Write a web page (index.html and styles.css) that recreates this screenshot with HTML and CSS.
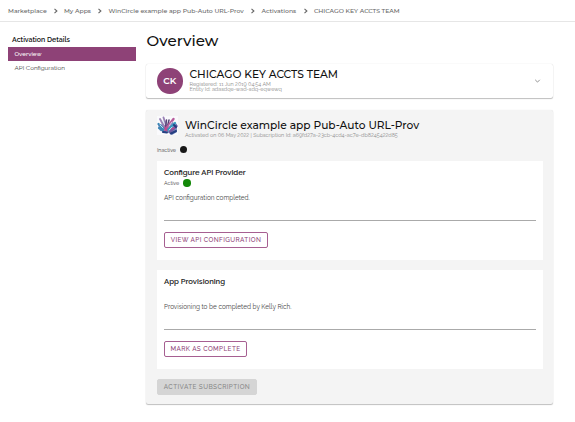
FILE: index.html
```
<!DOCTYPE html>
<html lang="en">
<head>
<meta charset="utf-8">
<title>Activation Overview</title>
<link rel="stylesheet" href="styles.css">
</head>
<body>
<nav class="crumbs">
  <span class="c1">Marketplace</span><svg class="sep" viewBox="0 0 6 8"><path d="M1.5 1.8 3.900 4 1.5 6.200"/></svg>
  <span class="c2">My Apps</span><svg class="sep" viewBox="0 0 6 8"><path d="M1.5 1.8 3.900 4 1.5 6.200"/></svg>
  <span class="c3">WinCircle example app Pub-Auto URL-Prov</span><svg class="sep" viewBox="0 0 6 8"><path d="M1.5 1.8 3.900 4 1.5 6.200"/></svg>
  <span class="c4">Activations</span><svg class="sep" viewBox="0 0 6 8"><path d="M1.5 1.8 3.900 4 1.5 6.200"/></svg>
  <span class="c5">CHICAGO KEY ACCTS TEAM</span>
</nav>
<div class="layout">
  <aside class="side">
    <h2 class="side-title">Activation Details</h2>
    <a class="side-item active">Overview</a>
    <a class="side-item">API Configuration</a>
  </aside>
  <main class="main">
    <h1>Overview</h1>
    <section class="card account">
      <div class="avatar">CK</div>
      <div class="info">
        <h3 class="name">CHICAGO KEY ACCTS TEAM</h3>
        <p class="meta">Registered: 11 Jun 2019 04:54 AM</p>
        <p class="meta">Entity Id: adasdqe-wad-sdq-eqwewq</p>
      </div>
      <svg class="chevron" viewBox="0 0 7 6"><path d="M1.2 1.8 3.5 4.1 5.8 1.8"/></svg>
    </section>
    <section class="card app">
      <header class="app-head">
        <svg class="logo" viewBox="0 0 21 19">
          <rect width="21" height="19" fill="#fafafc"/>
          <path d="M1 9l5-1 4 3 5-5 5 2v8l-5 3-5-3-7-1z" fill="#7d8fc0"/>
          <g fill="none" stroke-linecap="round">
            <path d="M3 3l5 9M6.500 1.500l3 9" stroke="#9a83b5" stroke-width="1.900"/>
            <path d="M1.5 8 9 15M2 12l5 3" stroke="#3d86b5" stroke-width="2.2"/>
            <path d="M9.5 4 8.500 12M12 4l-2 8" stroke="#574477" stroke-width="1.500"/>
            <path d="M16.500 3 8 14" stroke="#b75b9b" stroke-width="2.400"/>
            <path d="M18 7 9 16" stroke="#3199bd" stroke-width="2.2"/>
            <path d="M19.500 10 13 16" stroke="#7359a0" stroke-width="2.400"/>
            <path d="M14 17.500l5-2.500M6 16l4 .5M17 9l2 2" stroke="#263f81" stroke-width="2"/>
            <path d="M3 9l3 3M12 10l3-4M12 14l3-3M6 5l1 2" stroke="#cce4f2" stroke-width=".9"/>
            <path d="M8 11l2 4M15 13l2-1" stroke="#cc4386" stroke-width="1.300"/>
          </g>
        </svg>
        <div>
          <h3 class="app-name">WinCircle example app Pub-Auto URL-Prov</h3>
          <p class="meta sub">Activated on 06 May 2022 | Subscription Id: a69fd27a-23cb-4cd4-ac7e-db8245422d85</p>
        </div>
      </header>
      <div class="status">Inactive<i class="dot"></i></div>
      <div class="panel">
        <h4>Configure API Provider</h4>
        <div class="status on">Active<i class="dot green"></i></div>
        <p class="desc">API configuration completed.</p>
        <hr>
        <button class="btn view">VIEW API CONFIGURATION</button>
      </div>
      <div class="panel second">
        <h4 class="prov">App Provisioning</h4>
        <p class="desc">Provisioning to be completed by Kelly Rich.</p>
        <hr>
        <button class="btn mark">MARK AS COMPLETE</button>
      </div>
      <button class="btn disabled" disabled>ACTIVATE SUBSCRIPTION</button>
    </section>
  </main>
</div>
</body>
</html>
```
FILE: styles.css
```
* { box-sizing: border-box; }
body { margin: 0; background: #fff; color: #555; font-family: Raleway, "Open Sans", sans-serif; height: 422px; overflow: hidden; }
h1, h2, h3, h4, p { margin: 0; white-space: nowrap; }
.crumbs { display: flex; align-items: center; height: 22px; padding-left: 8px; border-bottom: 1px solid #e6e6e6; font: 500 6.17px/10px Montserrat, Inter, sans-serif; color: #666; white-space: nowrap; }
.c1 { width: 38.5px; }
.c2 { width: 27px; }
.c3 { width: 135.5px; }
.c4 { width: 35px; }
.sep { width: 6px; height: 8px; margin: 0 5.3px 0 6.2px; fill: none; stroke: #666; stroke-width: 1.1; }
.layout { display: flex; }
.side { width: 136px; padding: 12px 0 0 8px; }
.side-title { padding-left: 4px; height: 13px; font-size: 7.04px; line-height: 12px; font-weight: 600; color: #111; }
.side-item { display: block; height: 14px; padding-left: 6.5px; font-size: 6.31px; line-height: 14px; color: #444; }
.active { background: #8e4277; color: #fff; font-weight: 500; font-size: 6.15px; }
.main { width: 417px; padding: 0 0 0 10px; }
h1 { height: 42px; padding: 9px 0 0 .5px; font: 500 15.1px/20px Montserrat, Inter, sans-serif; color: #111; }
.card { border-radius: 2px; }
.account { display: flex; height: 34px; padding: 4px 12px 0 11px; box-shadow: 0 1px 1px rgba(0,0,0,.24), 0 0 1px rgba(0,0,0,.2); }
.avatar { flex: none; width: 25.5px; height: 25.5px; border-radius: 50%; background: #8e4277; color: #fff; font: 600 9px/26px Montserrat, Inter, sans-serif; text-align: center; }
.info { flex: 1; padding-left: 7px; }
.name, .app-name { font: 500 10.67px/13px Montserrat, Inter, sans-serif; color: #111; }
.meta { font-size: 5.42px; line-height: 5.5px; color: #888; }
.name { height: 13px; }
.account .meta:nth-child(2) { margin-top: 0.5px; }
.chevron { width: 7px; height: 6px; margin-top: 9.5px; fill: none; stroke: #888; stroke-width: .9; }
.app { margin-top: 12px; height: 294px; padding: 5px 10px 0 11px; background: #f4f4f4; box-shadow: 0 1px 1px rgba(0,0,0,.24), 0 0 1px rgba(0,0,0,.12); }
.app-head { display: flex; gap: 7px; height: 28px; }
.logo { flex: none; width: 21px; height: 19px; margin-top: 1px; }
.app-name { padding-top: 4px; height: 17px; }
.sub { margin-top: .5px; }
.status { display: flex; align-items: center; gap: 4px; height: 13px; font-size: 5.3px; color: #444; }
.dot { width: 7.5px; height: 7.5px; border-radius: 50%; background: #171717; }
.green { background: #138808; }
.panel { height: 99px; margin-top: 5px; padding: 6px 7px 0; background: #fff; }
.second { margin-top: 10px; }
h4 { font-size: 7.7px; line-height: 12px; font-weight: 600; color: #222; }
.on { height: 8px; }
.desc { font-size: 6.43px; line-height: 10px; margin-top: 5.5px; color: #444; }
.second .desc { margin-top: 14px; }
hr { height: 1px; border: 0; margin: 17.5px 0 0; background: #aaa; }
.second hr { margin-top: 17px; }
.btn { display: block; height: 16px; padding: 0; border: 1px solid #a65f91; border-radius: 2px; background: #fff; color: #8e4277; font: 500 6.4px/14px Raleway, "Open Sans", sans-serif; letter-spacing: .41px; white-space: nowrap; text-align: center; }
.panel .btn { margin-top: 11px; }
.view { width: 104px; }
.mark { width: 83px; }
.disabled { width: 100px; margin-top: 10px; background: #d5d5d5; border-color: #d5d5d5; color: #888; }
```
